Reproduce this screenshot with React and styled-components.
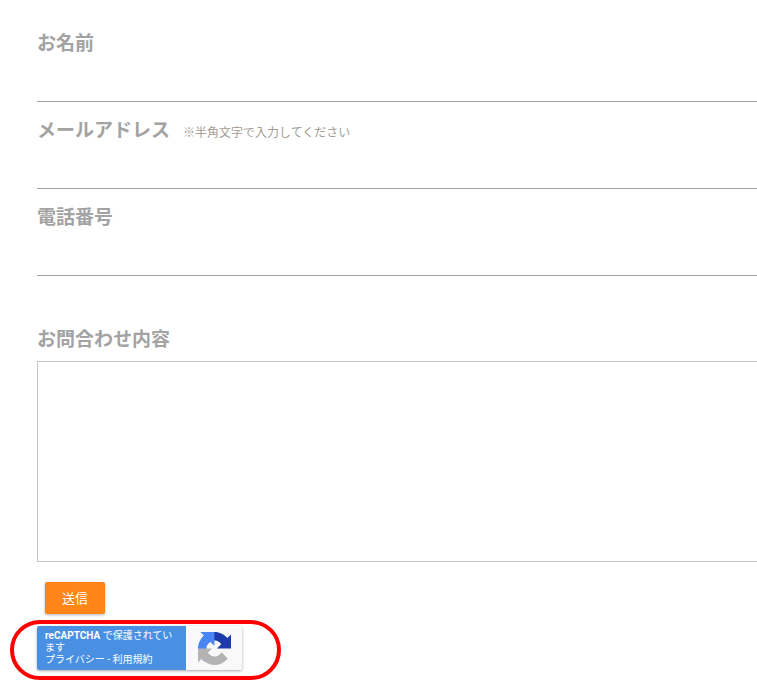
import styled, { createGlobalStyle } from "styled-components";

const GlobalStyle = createGlobalStyle`
  html, body {
    margin: 0;
    padding: 0;
    background: #fff;
    overflow: hidden;
  }
  body {
    font-family: "Roboto", "Noto Sans CJK JP", sans-serif;
  }
`;

const App = () => {
  return (
    <>
      <GlobalStyle />
      <Page>
        <Field>
          <Label>
            <LabelText>お名前</LabelText>
          </Label>
          <Input />
        </Field>
        <Field>
          <Label>
            <LabelText>メールアドレス</LabelText>
            <Note>※半角文字で入力してください</Note>
          </Label>
          <Input />
        </Field>
        <Field>
          <Label>
            <LabelText>電話番号</LabelText>
          </Label>
          <Input />
        </Field>
        <MessageField>
          <Label>
            <LabelText>お問合わせ内容</LabelText>
          </Label>
          <Message />
        </MessageField>
        <SubmitButton type="button">送信</SubmitButton>
        <Badge>
          <BadgeText>
            <BadgeLine>
              <BadgeBrand>reCAPTCHA</BadgeBrand> で保護されてい
            </BadgeLine>
            <BadgeLine>ます</BadgeLine>
            <BadgeLine>プライバシー - 利用規約</BadgeLine>
          </BadgeText>
          <BadgeLogo>
            <svg width="33" height="33" viewBox="0 0 64 64">
              <path
                d="M64 31.955l-.033-1.37V4.687l-7.16 7.16C50.948 4.674 42.033.093 32.05.093c-10.4 0-19.622 4.96-25.458 12.64l11.736 11.86a15.55 15.55 0 0 1 4.754-5.334c2.05-1.6 4.952-2.906 8.968-2.906.485 0 .86.057 1.135.163 4.976.393 9.288 3.14 11.828 7.124l-8.307 8.307c10.522-.04 22.4-.066 27.295.005"
                fill="#1c3aa9"
              />
              <path
                d="M31.862.001l-1.37.033H4.594l7.16 7.16C4.58 13.05 0 21.967 0 31.95c0 10.4 4.96 19.622 12.64 25.458l11.86-11.736a15.55 15.55 0 0 1-5.334-4.754c-1.6-2.05-2.906-4.952-2.906-8.968 0-.485.057-.86.163-1.135.393-4.976 3.14-9.288 7.124-11.828l8.307 8.307c-.04-10.522-.066-22.4.005-27.295"
                fill="#4a85f4"
              />
              <path
                d="M.002 31.953l.033 1.37v25.898l7.16-7.16c5.86 7.173 14.774 11.754 24.76 11.754 10.4 0 19.622-4.96 25.458-12.64l-11.736-11.86a15.55 15.55 0 0 1-4.754 5.334c-2.05 1.6-4.952 2.906-8.968 2.906-.485 0-.86-.057-1.135-.163-4.976-.393-9.288-3.14-11.828-7.124l8.307-8.307c-10.522.04-22.4.066-27.295-.005"
                fill="#b4b4b4"
              />
            </svg>
          </BadgeLogo>
        </Badge>
        <Circle />
      </Page>
    </>
  );
};

const Page = styled.div`
  position: relative;
  width: 757px;
  height: 695px;
  box-sizing: border-box;
  padding: 30px 0 0 37px;
  overflow: hidden;
`;

const Field = styled.div`
  display: flex;
  flex-direction: column;
  height: 87px;
`;

const MessageField = styled.div`
  display: flex;
  flex-direction: column;
  margin-top: 35px;
`;

const Label = styled.div`
  display: flex;
  align-items: center;
  box-sizing: border-box;
  height: 27px;
  padding-bottom: 5px;
  white-space: nowrap;
`;

const LabelText = styled.span`
  font-size: 19px;
  font-weight: 700;
  color: #a3a3a3;
`;

const Note = styled.span`
  margin-left: 13px;
  margin-top: 7px;
  font-size: 12px;
  color: #a39c94;
`;

const Input = styled.div`
  height: 44px;
  border-bottom: 1px solid #a0a0a0;
  width: 760px;
`;

const Message = styled.div`
  width: 760px;
  height: 199px;
  margin-top: 8px;
  border: 1px solid #c4c4c4;
`;

const SubmitButton = styled.button`
  display: block;
  width: 60px;
  height: 32px;
  margin: 20px 0 0 8px;
  padding: 0 0 2px;
  border: none;
  border-radius: 2px;
  background: #ff851b;
  box-shadow: 0 1px 3px rgba(0, 0, 0, 0.3);
  color: #fff;
  font-family: inherit;
  font-size: 13px;
`;

const Badge = styled.div`
  display: flex;
  width: 205px;
  height: 44px;
  margin-top: 12px;
  border-radius: 2px;
  box-shadow: 0 1px 3px rgba(0, 0, 0, 0.35);
  overflow: hidden;
`;

const BadgeText = styled.div`
  box-sizing: border-box;
  width: 149px;
  padding: 4px 0 0 8px;
  background: #4a90e2;
  color: #fff;
  font-size: 10px;
  line-height: 12px;
  white-space: nowrap;
`;

const BadgeLine = styled.div``;

const BadgeBrand = styled.span`
  font-weight: 700;
`;

const BadgeLogo = styled.div`
  flex: 1;
  display: flex;
  align-items: center;
  justify-content: center;
  background: #f9f9f9;
`;

const Circle = styled.div`
  position: absolute;
  left: 10px;
  top: 620px;
  width: 271px;
  height: 60px;
  box-sizing: border-box;
  border: 4px solid #f00;
  border-radius: 30px;
`;

export default App;
